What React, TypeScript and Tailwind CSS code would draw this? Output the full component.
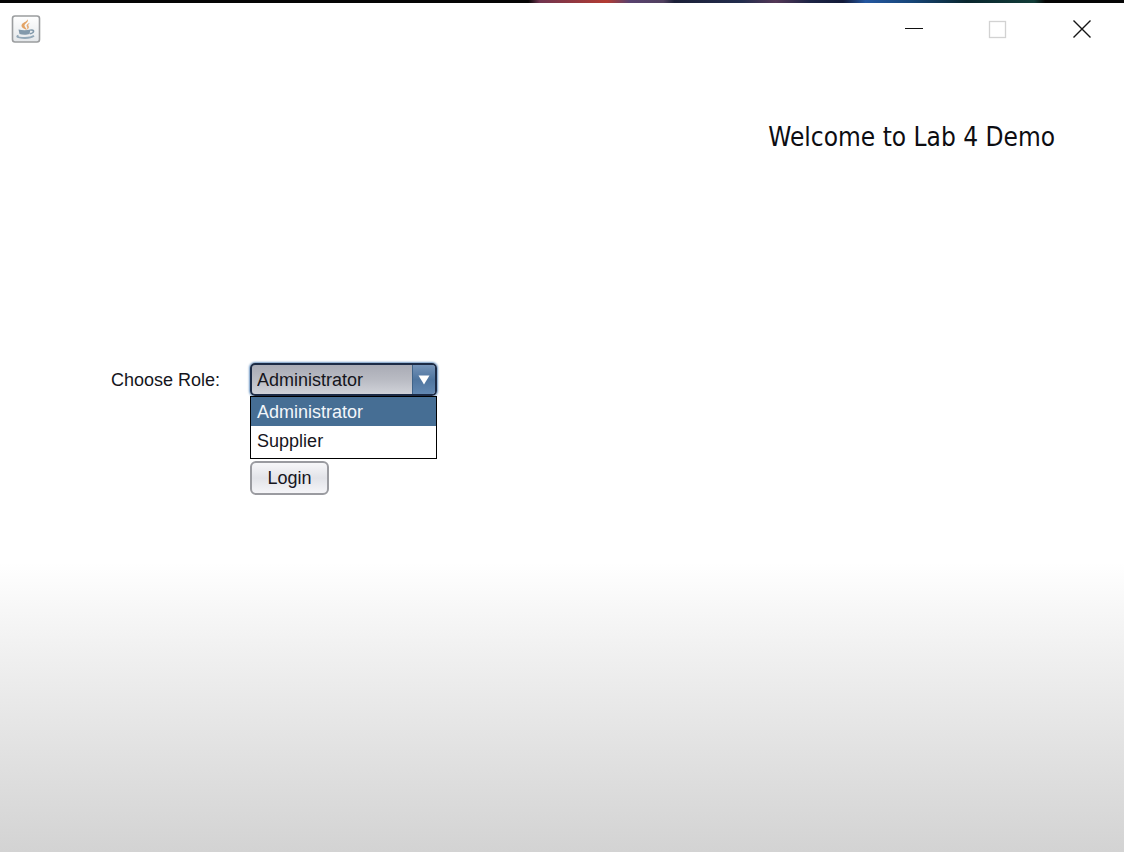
import { useState } from "react";

const roles = ["Administrator", "Supplier"];

function JavaIcon() {
  return (
    <svg viewBox="0 0 30 28" className="h-7 w-[30px]" aria-hidden="true">
      <defs>
        <linearGradient id="tile" x1="0" y1="0" x2="0" y2="1">
          <stop offset="0" stopColor="#ffffff" />
          <stop offset="1" stopColor="#e4e7ea" />
        </linearGradient>
      </defs>
      <rect x="1.500" y="1" width="27" height="26" rx="2.500" fill="url(#tile)" stroke="#9b9d9f" strokeWidth="1.600" />
      <path d="M16.500 4.200c1.800 3-3.300 4.200-3 6.600.2 1.600 1.900 2.400 2.400 4-3-.8-5.700-2.400-5.400-4.500.3-2.800 5.500-3.400 6-6.100z" fill="#e3a365" />
      <path d="M19 7.800c-2.600 1-4.200 2.200-3.200 3.800.6 1 .8 1.900-.1 3.200 2.600-1.400 2.500-2.700 1.800-3.700-.6-1 0-2 1.500-3.300z" fill="#e6ab74" />
      <path d="M7.500 14.600c4 1 8.800.9 12-.1l-1 4.500c-2.600 1.100-7.200 1.100-10 0z" fill="#8299ab" />
      <path d="M19.300 15.200c4.600-1.200 4.300 2.900-.5 3.600" fill="none" stroke="#8299ab" strokeWidth="1.600" />
      <path d="M7.500 20.600c-6 2 10.500 4 15.500.2" fill="none" stroke="#93a8b8" strokeWidth="1.800" />
    </svg>
  );
}

function TitleBar() {
  return (
    <header className="flex h-[52px] items-center justify-between pr-8 pl-[11px]">
      <JavaIcon />
      <div className="flex items-center gap-16">
        <button type="button" aria-label="Minimize">
          <svg viewBox="0 0 20 20" className="size-5" shapeRendering="crispEdges">
            <path d="M1 9.500h18" stroke="#111111" strokeWidth="1.400" />
          </svg>
        </button>
        <button type="button" aria-label="Maximize" disabled>
          <svg viewBox="0 0 20 20" className="size-5">
            <rect x="1.500" y="2.500" width="16" height="16" fill="none" stroke="#d2d2d2" strokeWidth="1.300" />
          </svg>
        </button>
        <button type="button" aria-label="Close">
          <svg viewBox="0 0 20 20" className="size-5">
            <path d="M1.500 1.500l17 17M18.500 1.500l-17 17" stroke="#151515" strokeWidth="1.400" />
          </svg>
        </button>
      </div>
    </header>
  );
}

function RolePicker() {
  const [role, setRole] = useState(roles[0]);
  const [open, setOpen] = useState(true);

  return (
    <div className="relative">
      <select
        id="role"
        value={role}
        onChange={(event) => setRole(event.target.value)}
        onMouseDown={(event) => {
          event.preventDefault();
          setOpen(!open);
        }}
        className="block h-[33px] w-[187px] appearance-none rounded-[5px] border-2 border-[#1b2a45] bg-linear-to-b from-[#a9abb5] via-[#b9bbc3] to-[#d0d2d9] pl-[5px] text-[#15151c] shadow-[0_0_2px_1px_#7199c4] outline-none"
      >
        {roles.map((name) => (
          <option key={name}>{name}</option>
        ))}
      </select>
      <span className="pointer-events-none absolute inset-y-0.5 right-0.5 flex w-[23px] items-center justify-center rounded-r-[3px] border-l border-[#3f6389] bg-linear-to-b from-[#7594b9] via-[#4f759f] to-[#6288b2]">
        <svg viewBox="0 0 12 10" className="h-2.5 w-3" aria-hidden="true">
          <path d="M.5.5h11L6 9.500z" fill="#ffffff" />
        </svg>
      </span>
      {open && (
        <ul
          role="listbox"
          aria-label="Roles"
          className="absolute top-full left-0 z-10 h-[63px] w-full border border-black bg-white"
        >
          {roles.map((name) => (
            <li
              key={name}
              role="option"
              aria-selected={name === role}
              onClick={() => {
                setRole(name);
                setOpen(false);
              }}
              className="flex h-[29px] items-center pl-1.5 aria-selected:bg-[#466e94] aria-selected:text-[#f2f6fa]"
            >
              {name}
            </li>
          ))}
        </ul>
      )}
    </div>
  );
}

export default function App() {
  return (
    <div className="flex min-h-screen flex-col bg-linear-to-b from-white from-66% via-[#f1f1f1] via-76% to-[#d3d3d3] font-['Liberation_Sans',Arial,sans-serif] text-lg text-[#15151c]">
      <div className="h-[3px] bg-[linear-gradient(90deg,#050505_47%,#70344f_48%,#b33b32_54%,#58416f_56%,#51405f_59%,#1c2038_60%,#222d4d_66%,#543756_69%,#1d2445_72%,#121a38_75%,#2457a0_77%,#174679_81%,#09262e_86%,#123d38_92%,#050505_93%)]" />
      <TitleBar />
      <main>
        <h1 className="pt-16 pr-[69px] text-right font-['DejaVu_Sans_Condensed','Noto_Sans',sans-serif] text-[26px] leading-9 text-[#0d0d12]">
          Welcome to Lab 4 Demo
        </h1>
        <form
          onSubmit={(event) => event.preventDefault()}
          className="grid grid-cols-[auto_1fr] items-center gap-x-[30px] gap-y-[65px] pt-[208px] pl-[111px]"
        >
          <label htmlFor="role">Choose Role:</label>
          <div className="flex">
            <RolePicker />
          </div>
          <button
            type="submit"
            className="col-start-2 h-[34px] w-[79px] rounded-[6px] border-2 border-[#9a9ba0] bg-linear-to-b from-[#f7f7f9] via-[#e2e3e8] to-[#f5f5f8]"
          >
            Login
          </button>
        </form>
      </main>
    </div>
  );
}
